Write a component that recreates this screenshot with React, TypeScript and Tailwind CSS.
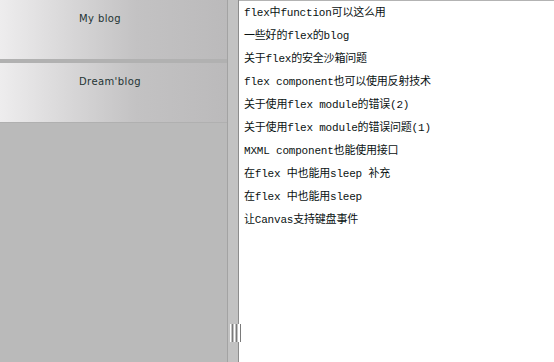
import React from 'react';

const posts = [
  'flex中function可以这么用',
  '一些好的flex的blog',
  '关于flex的安全沙箱问题',
  'flex component也可以使用反射技术',
  '关于使用flex module的错误(2)',
  '关于使用flex module的错误问题(1)',
  'MXML component也能使用接口',
  '在flex 中也能用sleep 补充',
  '在flex 中也能用sleep',
  '让Canvas支持键盘事件',
];

function BlogHeader({ title }: { title: string }) {
  return (
    <div
      className="h-[59px] bg-gradient-to-r from-[#eeedee] via-[#c3c2c3] via-60% to-[#bbbabb] pl-[79px] pt-[12px] text-[10px] leading-[14px] tracking-[0.4px] text-[#243434]"
      style={{ fontFamily: '"DejaVu Sans", Verdana, sans-serif' }}
    >
      {title}
    </div>
  );
}

export default function App() {
  return (
    <div className="flex h-[362px] w-[554px] overflow-hidden bg-white">
      {/* Sidebar */}
      <div className="flex w-[227px] flex-col bg-[#bababa]">
        <BlogHeader title="My blog" />
        <div className="h-[4px] bg-[#b1b1b1]" />
        <BlogHeader title="Dream'blog" />
        <div className="h-px bg-[#b0b0b0]" />
      </div>

      {/* Divider */}
      <div className="flex w-[12px] border-l border-r border-l-[#a3a3a3] border-r-[#8c8c8c] bg-[#c2c2c2]">
        <div className="mt-[324px] ml-[2px] flex h-[18px] gap-px">
          <div className="w-px bg-white" />
          <div className="w-px bg-[#7a7a7a]" />
          <div className="w-px bg-white" />
          <div className="w-px bg-[#7a7a7a]" />
          <div className="w-px bg-white" />
          <div className="w-px bg-[#7a7a7a]" />
        </div>
      </div>

      {/* Post list */}
      <div className="flex-1 border-t border-[#b3b3b3] pl-[5px] pt-px">
        <ul
          className="text-[11px] leading-[23px] tracking-[-0.2px] text-[#0a1212]"
          style={{ fontFamily: '"Liberation Mono", "Noto Sans CJK SC", monospace' }}
        >
          {posts.map((p) => (
            <li key={p} className="whitespace-pre">
              {p}
            </li>
          ))}
        </ul>
      </div>
    </div>
  );
}
